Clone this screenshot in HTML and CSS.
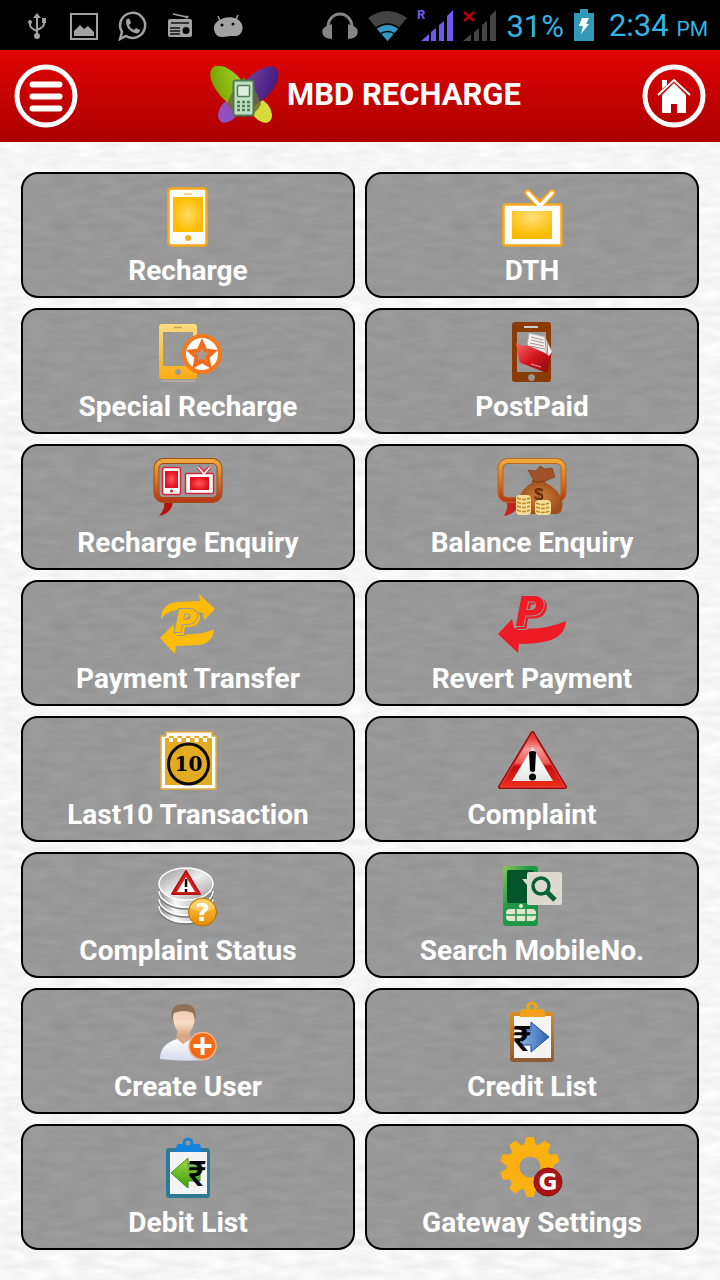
FILE: index.html
```html
<!DOCTYPE html>
<html lang="en">
<head>
<meta charset="utf-8">
<meta name="viewport" content="width=device-width, initial-scale=1">
<title>MBD RECHARGE</title>
<link rel="stylesheet" href="styles.css">
</head>
<body>
<svg class="defs" width="0" height="0" aria-hidden="true">
  <defs>
    <radialGradient id="gold"><stop offset="0" stop-color="#ffdc68"/><stop offset="1" stop-color="#fcbc00"/></radialGradient>
    <radialGradient id="goldTop" cy=".2" r=".7"><stop offset="0" stop-color="#ffe07a"/><stop offset="1" stop-color="#fbbb00"/></radialGradient>
    <radialGradient id="redGlow"><stop offset="0" stop-color="#ff5a5a"/><stop offset="1" stop-color="#e3101f"/></radialGradient>
    <linearGradient id="amber" x2="0" y2="1"><stop offset="0" stop-color="#fbdc80"/><stop offset="1" stop-color="#fbab12"/></linearGradient>
    <linearGradient id="bubble" x2="0" y2="1"><stop offset="0" stop-color="#f0a83c"/><stop offset=".6" stop-color="#cf6a24"/><stop offset="1" stop-color="#b83a18"/></linearGradient>
    <linearGradient id="folder" x2="1" y2="1"><stop offset="0" stop-color="#f46a6a"/><stop offset=".5" stop-color="#d4141c"/><stop offset="1" stop-color="#800a0c"/></linearGradient>
    <linearGradient id="warn" x2="0" y2="1"><stop offset="0" stop-color="#e01818"/><stop offset=".3" stop-color="#f79a9a"/><stop offset=".55" stop-color="#ee5a5a"/><stop offset=".62" stop-color="#c80c0c"/><stop offset="1" stop-color="#ee2c1c"/></linearGradient>
    <linearGradient id="paper" x2="0" y2="1"><stop offset="0" stop-color="#dcdcdc"/><stop offset=".4" stop-color="#fff"/><stop offset="1" stop-color="#e4e4e4"/></linearGradient>
    <linearGradient id="steel" x2="1"><stop offset="0" stop-color="#888"/><stop offset=".3" stop-color="#fafafa"/><stop offset=".7" stop-color="#bbb"/><stop offset="1" stop-color="#777"/></linearGradient>
    <linearGradient id="disc" x2="1" y2="1"><stop offset="0" stop-color="#8f8f8f"/><stop offset=".5" stop-color="#eee"/><stop offset="1" stop-color="#999"/></linearGradient>
    <linearGradient id="coin" x2="0" y2="1"><stop offset="0" stop-color="#ffca55"/><stop offset="1" stop-color="#e58a00"/></linearGradient>
    <linearGradient id="green" x2="1" y2="1"><stop offset="0" stop-color="#8ccc50"/><stop offset=".4" stop-color="#1f9a49"/><stop offset="1" stop-color="#1d9448"/></linearGradient>
    <linearGradient id="face" x2="0" y2="1"><stop offset="0" stop-color="#f0c3a0"/><stop offset=".6" stop-color="#f9dec6"/><stop offset="1" stop-color="#dcaa84"/></linearGradient>
    <linearGradient id="shirt" x2="0" y2="1"><stop offset="0" stop-color="#fff"/><stop offset="1" stop-color="#d5d9ec"/></linearGradient>
    <linearGradient id="blueArrow" x2="1"><stop offset="0" stop-color="#8aaee0"/><stop offset="1" stop-color="#2d62b0"/></linearGradient>
    <linearGradient id="greenArrow" x2="0" y2="1"><stop offset="0" stop-color="#9fdc4a"/><stop offset="1" stop-color="#3d9c08"/></linearGradient>
    <linearGradient id="wood" x2="0" y2="1"><stop offset="0" stop-color="#d98e24"/><stop offset="1" stop-color="#8b5a34"/></linearGradient>
    <radialGradient id="bag"><stop offset="0" stop-color="#c98038"/><stop offset="1" stop-color="#a04e1c"/></radialGradient>
    <linearGradient id="petalGreen" x2="1" y2="1"><stop offset="0" stop-color="#6a9c00"/><stop offset="1" stop-color="#b4dc2c"/></linearGradient>
    <linearGradient id="petalPurple" x1="1" x2="0" y2="1"><stop offset="0" stop-color="#3a1478"/><stop offset="1" stop-color="#7c48a8"/></linearGradient>
    <path id="tooth" d="M31 2h6l3 11H28z" stroke-width="2" stroke-linejoin="round"/>
  </defs>
</svg>

<div class="status">
  <div class="status-left">
    <svg class="notice" viewBox="0 0 32 32"><g fill="none" stroke="#a2a2a2" stroke-width="2"><path d="M17 7v20M10 12v4q0 3 7 6M24 12v3q0 3-7 6"/></g><g fill="#a2a2a2"><path d="M17 4l4 5h-8z"/><circle cx="17" cy="27" r="3"/><circle cx="10" cy="13" r="2"/><path d="M22 9h4v5h-4z"/></g></svg>
    <svg class="notice" viewBox="0 0 32 32"><path d="M3 5h26v25H3z" fill="none" stroke="#a2a2a2" stroke-width="2"/><path d="M6 27v-5l6-6 4 4 4-3 6 6v4z" fill="#a2a2a2"/></svg>
    <svg class="notice" viewBox="0 0 32 32"><path d="M4 30l2-7a12.500 12.500 0 1 1 4 4z" fill="none" stroke="#a2a2a2" stroke-width="2.500"/><path d="M10 12c1-3 3-3 4-1l1 3-2 2c1 3 3 4 5 5l2-2 4 2c0 3-3 4-5 3-5-1-9-6-9-12z" fill="#a2a2a2"/></svg>
    <svg class="notice" viewBox="0 0 32 32"><path d="M9 5l14 3" stroke="#a2a2a2" stroke-width="1.500"/><circle cx="23" cy="8" r="1.500" fill="#a2a2a2"/><rect x="4" y="10" width="24" height="18" rx="2" fill="#a2a2a2"/><path d="M7 14h18M6 19h10M6 22h10M6 25h10" stroke="#111" stroke-width="1.500"/><circle cx="22" cy="21.500" r="3.500" fill="#050505"/></svg>
    <svg class="notice" viewBox="0 0 32 32"><path d="M9 14L6 7M23 13l3-7" stroke="#a2a2a2" stroke-width="1.500"/><path d="M8 11c3-3 12-4 17-1 6 3 7 10 4 14-2 4-7 3-10 3s-5 1-9 1c-6 0-8-5-8-9 0-4 3-7 6-8z" fill="#a2a2a2"/><circle cx="10" cy="16" r="1.500"/><circle cx="21" cy="15" r="1.500"/></svg>
  </div>
  <div class="status-right">
    <svg width="36" height="32" viewBox="0 0 36 32"><path d="M6 21v-3a12 13 0 0 1 24 0v3" fill="none" stroke="#858585" stroke-width="3"/><path d="M10 15v15c-12 0-12-11-5-13zM26 15v15c12 0 12-11 5-13z" fill="#858585"/></svg>
    <svg width="39" height="32" viewBox="0 0 39 32"><path d="M0 9Q19-5 39 9L19.500 32z" fill="#444"/><path d="M9 20q10.500-8 21 0L19.500 32z" fill="#3498c0"/><path d="M8 19q11.500-8 23 0M12 25q7.500-5 15 0" fill="none" stroke="#000" stroke-width="1.500"/></svg>
    <svg class="signal" width="36" height="34" viewBox="0 0 36 34"><text class="roam" x="0" y="11" fill="#7456f0">R</text><path d="M4 33l8-7v7zM14 24l5-4v13h-5zM22 17l5-4v20h-5zM30 8l6-6v31h-6z" fill="#7456f0"/></svg>
    <svg width="33" height="34" viewBox="0 0 33 34"><path d="M1 4l10 9M11 4L1 13" stroke="#b80000" stroke-width="2.500"/><path d="M0 33l8-7v7zM11 24l5-4v13h-5zM19 17l5-4v20h-5zM27 8l6-6v31h-6z" fill="#444"/></svg>
    <span class="percent">31%</span>
    <svg width="20" height="32" viewBox="0 0 20 32"><path d="M0 4h6V0h8v4h6v28H0z" fill="#3498b8"/><path d="M8 9h7l-3 6h3L7 25l2-8H5z" fill="#fff"/></svg>
    <time class="clock">2:34 <small>PM</small></time>
  </div>
</div>

<header class="bar">
  <button class="round" type="button" aria-label="Menu">
    <svg viewBox="0 0 64 64"><circle cx="32" cy="32" r="29" fill="none" stroke="#fff" stroke-width="5"/><path d="M18.500 20.500h27M18.500 32.500h27M18.500 44.500h27" stroke="#fff" stroke-width="6" stroke-linecap="round"/></svg>
  </button>
  <div class="brand">
    <svg class="logo" viewBox="0 0 70 58"><ellipse cx="22" cy="45" rx="9" ry="14" transform="rotate(38 22 42)" fill="#9050c0"/><ellipse cx="50" cy="45" rx="9" ry="14" transform="rotate(-38 50 42)" fill="#d8dc38"/><ellipse cx="21" cy="21" rx="13" ry="26" transform="rotate(-41 21 21)" fill="url(#petalGreen)"/><ellipse cx="49" cy="21" rx="13" ry="26" transform="rotate(45 49 21)" fill="url(#petalPurple)"/><path d="M35 11q-13 14-17 27 6 10 17 13 13-3 17-13Q48 24 35 11z" fill="#766b2e" opacity=".85"/><rect x="24" y="14" width="21" height="36" rx="2" fill="#557b56" stroke="#4c7450"/><rect x="25.500" y="15.500" width="18" height="33" rx="1" fill="#bfe0c0"/><rect x="28.500" y="19.500" width="12" height="11" rx="1" fill="#dcefdc" stroke="#557b56" stroke-width="1.500"/><path d="M28 36h13M28 40h13M28 44h13" stroke="#557b56" stroke-width="2.500" stroke-dasharray="3 2"/></svg>
    <h1>MBD RECHARGE</h1>
  </div>
  <button class="round" type="button" aria-label="Home">
    <svg viewBox="0 0 64 64"><circle cx="32" cy="32" r="29" fill="none" stroke="#fff" stroke-width="5"/><path d="M32 19L20 31v18h9V40h6v9h9V31z" fill="#fff"/><path d="M16 31l16-15 16 15" fill="none" stroke="#fff" stroke-width="2"/><path d="M20 16h5v5l-5 4z" fill="#fff"/></svg>
  </button>
</header>

<main class="menu">
  <button class="tile" type="button">
    <svg viewBox="0 0 72 68"><rect x="16.500" y="4.500" width="38" height="57" rx="3" fill="#fff" stroke="#f9a81c" stroke-width="2.500"/><rect x="21" y="13" width="30" height="35" fill="url(#gold)"/><path d="M32 10h8" stroke="#f6c46c" stroke-width="1.500"/><circle cx="36" cy="54" r="3" fill="#f5ae20"/></svg>
    <span>Recharge</span>
  </button>
  <button class="tile" type="button">
    <svg viewBox="0 0 72 68"><path d="M32 9l12 12L56 9" fill="none" stroke="#f9a81c" stroke-width="7" stroke-linecap="round"/><rect x="7.500" y="20.500" width="58" height="41" rx="2" fill="#fff" stroke="#f9a81c" stroke-width="2.500"/><path d="M32 9l12 13L56 9" fill="none" stroke="#fff" stroke-width="3.500" stroke-linecap="round"/><rect x="16" y="27" width="40" height="28" fill="url(#goldTop)"/></svg>
    <span>DTH</span>
  </button>
  <button class="tile" type="button">
    <svg viewBox="0 0 72 68"><path fill-rule="evenodd" d="M10 4h32q3 0 3 3v49q0 3-3 3H10q-3 0-3-3V7q0-3 3-3zm1 8v34h30V12zm15 37a3 3 0 1 0 .1 0z" fill="url(#amber)"/><path d="M22 7.500h8" stroke="#dca040" stroke-width="1.500"/><path d="M9 61h34" stroke="#d8c9a8" opacity=".7"/><circle cx="50" cy="34" r="18" fill="#fff" stroke="#f47a1c" stroke-width="4"/><path d="M50 23l3.500 7.500 8 1-6 5.500 1.500 8-7-4-7 4 1.500-8-6-5.500 8-1z" fill="#a59b92" stroke="#f26a1c" stroke-width="4"/></svg>
    <span>Special Recharge</span>
  </button>
  <button class="tile" type="button">
    <svg viewBox="0 0 72 68"><path fill-rule="evenodd" d="M19 2h33q3 0 3 3v54q0 3-3 3H19q-3 0-3-3V5q0-3 3-3zm2 10v40h29V12zm14.500 42a3.500 3.500 0 1 0 .1 0z" fill="#8b3a04"/><path d="M28 7h14" stroke="#ccc" stroke-width="2"/><path d="M33 13l16 4 7 15-6 14-20-12z" fill="#f4f0f0" stroke="#b9a9a9" stroke-width=".7"/><path d="M35 17l12 3M35 20l13 3M34 23l14 3M34 26l15 3M49 18l2 22M51 22l1 16" stroke="#a98f8f" stroke-width="1"/><path d="M20 23l7 3 4-1 18 8 4 3 3-4-5 20q-1 1-3 0L25 43q-1 0-2-3z" fill="url(#folder)"/><path d="M35 44l10 3" stroke="#f8a0a0"/></svg>
    <span>PostPaid</span>
  </button>
  <button class="tile" type="button">
    <svg viewBox="0 0 72 68"><path d="M12 43q2 10-5 17 13-3 14-14z" fill="#b5120f"/><rect x="4.500" y="5" width="63" height="39" rx="7" fill="none" stroke="#a04c18" stroke-width="6"/><rect x="4.500" y="5" width="63" height="39" rx="7" fill="none" stroke="url(#bubble)" stroke-width="4"/><rect x="10.500" y="11.500" width="18" height="27" rx="2" fill="#fff" stroke="#dc2434" stroke-width="1.500"/><rect x="13" y="15" width="13" height="17" fill="url(#redGlow)"/><circle cx="19.500" cy="35" r="1.500" fill="#d22"/><path d="M46 11l6 6 6-6" fill="none" stroke="#e02c3c" stroke-width="4"/><rect x="33.500" y="17.500" width="28" height="20" rx="1" fill="#fff" stroke="#dc2434" stroke-width="1.500"/><path d="M46 11l6 7 6-7" fill="none" stroke="#fff" stroke-width="1.500"/><rect x="38" y="21" width="19" height="13" fill="url(#redGlow)"/></svg>
    <span>Recharge Enquiry</span>
  </button>
  <button class="tile" type="button">
    <svg viewBox="0 0 72 68"><path d="M9 42q5 8-1 18 12-2 17-14z" fill="#c9201c"/><rect x="4.500" y="5" width="63" height="39" rx="7" fill="none" stroke="#b56820" stroke-width="6"/><rect x="4.500" y="5" width="63" height="39" rx="7" fill="none" stroke="url(#bubble)" stroke-width="4"/><path d="M37 28v-5l-5-9 8 1 4-5 5 3 7-1 3 9-10 4v4z" fill="#a0522a" stroke="#7d3c1c" stroke-width=".7"/><path d="M37 26q8-3 11 0 14 6 18 18 2 14-6 14H28q-9-2-6-14 4-12 15-18z" fill="url(#bag)"/><path d="M36 25q6 2 12 0" stroke="#7a3a12" fill="none"/><text class="dollar" x="38" y="44">$</text><rect x="20" y="39" width="15" height="20" rx="4" fill="#f5dc98"/><rect x="39" y="44" width="16" height="15" rx="4" fill="#f5dc98"/><path d="M21 42q7 3 13 0m-13 4q7 3 13 0m-13 4q7 3 13 0m-13 4q7 3 13 0m6-7q7 3 13 0m-13 4q7 3 13 0m-13 4q7 3 13 0" fill="none" stroke="#c08c28" stroke-width="1.500" stroke-dasharray="4 1"/></svg>
    <span>Balance Enquiry</span>
  </button>
  <button class="tile" type="button">
    <svg viewBox="0 0 72 68"><g fill="#fdbc08"><path d="M9 27Q9 12 25 10l23-1-1-7 16 15-11 11-1-7Q34 18 25 18 13 20 9 27z"/><path d="M8 46l13-13 3 9q26 2 38-5-1 14-15 16l-23 1-1 8z"/></g><text class="rupay gold-p" x="22" y="40">P</text></svg>
    <span>Payment Transfer</span>
  </button>
  <button class="tile" type="button">
    <svg viewBox="0 0 72 68"><path d="M2 42l14-15 2 9q30 3 52-7-1 15-18 20-12 3-29 3l-1 9z" fill="#ed1c24"/><text class="rupay red-p" x="19" y="34">P</text></svg>
    <span>Revert Payment</span>
  </button>
  <button class="tile" type="button">
    <svg viewBox="0 0 72 68"><path d="M14 4h46v4h4v53H9V8h5z" fill="#fff" stroke="#e2b03c" stroke-width="1.500"/><rect x="13" y="10" width="47" height="47" fill="#e3ab22"/><path d="M17 9.500h42" stroke="#e3ab22" stroke-width="3" stroke-dasharray="4.500 4"/><path d="M17 12h42" stroke="#fff" stroke-width="4" stroke-dasharray="4 4.500"/><circle cx="36.500" cy="36" r="20" fill="none" stroke="#0a0a0a" stroke-width="3"/><text class="ten" x="36.500" y="43">10</text></svg>
    <span>Last10 Transaction</span>
  </button>
  <button class="tile" type="button">
    <svg viewBox="0 0 72 68"><path d="M36.500 5L4 59h65z" fill="url(#warn)" stroke="#9c0c0c" stroke-width="4" stroke-linejoin="round"/><path d="M36.500 5L4 59h65z" fill="url(#warn)" stroke="#ec4848" stroke-width="1" stroke-linejoin="round"/><path d="M36.500 19L16 53h41z" fill="url(#paper)"/><path d="M33 24q3.500-2 7 0l-1 19q-2.500 2-5 0z"/><circle cx="36.500" cy="49" r="3.500"/></svg>
    <span>Complaint</span>
  </button>
  <button class="tile" type="button">
    <svg viewBox="0 0 72 68"><path d="M7 21v24a27 15 0 0 0 54 0V21z" fill="url(#steel)"/><path d="M7 29a27 16 0 0 0 54 0M7 37a27 16 0 0 0 54 0M7 44a27 16 0 0 0 54 0" fill="none" stroke="#777" stroke-width="1.500"/><path d="M7 27a27 16 0 0 0 54 0M7 35a27 16 0 0 0 54 0M7 42a27 16 0 0 0 54 0" fill="none" stroke="#fff" stroke-width="1.500"/><ellipse cx="34" cy="20" rx="27" ry="16" fill="url(#disc)" stroke="#fff" stroke-width="1.500"/><path d="M34 7L20 30h28z" fill="#de2020" stroke="#b81212" stroke-width="2" stroke-linejoin="round"/><path d="M34 13l-9 15h18z" fill="#fff"/><path d="M34 15v8M34 25v3" stroke="#000" stroke-width="2.500"/><circle cx="50.500" cy="48" r="14" fill="url(#coin)" stroke="#b06c08"/><path d="M38 44a13 11 0 0 1 25 0q-12 7-25 0z" fill="#ffdf90" opacity=".5"/><text class="mark" x="50.500" y="57">?</text></svg>
    <span>Complaint Status</span>
  </button>
  <button class="tile" type="button">
    <svg viewBox="0 0 72 68"><rect x="7" y="2" width="35" height="60" rx="3" fill="url(#green)"/><rect x="11" y="6" width="27" height="33" rx="2" fill="#04542c"/><path d="M33 8h31q2 0 2 2v29q0 2-2 2H33q-2 0-2-2V21l-5-6h5v-5q0-2 2-2z" fill="#dddad0"/><circle cx="45" cy="22" r="8" fill="none" stroke="#07603a" stroke-width="3.500"/><path d="M51 28l8 8" stroke="#07603a" stroke-width="5"/><circle cx="25" cy="42" r="2" fill="#e8ecd8"/><rect x="10" y="45" width="30" height="12" rx="4" fill="#e2e6d0"/><path d="M10 51h30M20 45v12M30 45v12" stroke="#1f9a49" stroke-width="1.500"/></svg>
    <span>Search MobileNo.</span>
  </button>
  <button class="tile" type="button">
    <svg viewBox="0 0 72 68"><path d="M25 30h13l1 14H24z" fill="#d8a888"/><path d="M8 59q0-15 17-20l6 5 8-5q14 4 16 21-24 2-47-1z" fill="url(#shirt)"/><path d="M21 14q0-9 11-9t11 9q0 12-5 18-6 5-12 0-5-6-5-18z" fill="url(#face)"/><path d="M20 20Q17 4 32 4q14 0 11 16l-2-7q-9-4-19 0z" fill="#917158"/><circle cx="50.500" cy="46" r="13.500" fill="#f36a16" stroke="#f6b48a" stroke-width="1.500"/><path d="M50.500 37v18M41.500 46h18" stroke="#fff" stroke-width="4"/></svg>
    <span>Create User</span>
  </button>
  <button class="tile" type="button">
    <svg viewBox="0 0 72 68"><rect x="14" y="12" width="44" height="50" rx="3" fill="url(#wood)"/><path d="M18 16h37v42H18z" fill="#f4f4f4"/><circle cx="36" cy="7" r="4" fill="none" stroke="#f0a810" stroke-width="3"/><path d="M26 9h5q5 4 10 0h6q2 0 2 8H24q0-8 2-8z" fill="#f0a01a"/><path d="M26 30h9v-8l18 15-18 15v-7h-9z" fill="url(#blueArrow)" stroke="#264f96"/><text class="rupee" x="17" y="51">₹</text></svg>
    <span>Credit List</span>
  </button>
  <button class="tile" type="button">
    <svg viewBox="0 0 72 68"><rect x="14" y="12" width="44" height="50" rx="3" fill="#2e7a94"/><path d="M18 16h37v42H18z" fill="#f4f4f4"/><circle cx="36" cy="7" r="4" fill="none" stroke="#1284dc" stroke-width="3"/><path d="M26 8h5q5 4 10 0h6q2 0 2 8H24q0-8 2-8z" fill="#1284dc"/><path d="M48 30H36v-8L19 37l17 15v-7h12z" fill="url(#greenArrow)" stroke="#3a8c12"/><text class="rupee" x="36" y="50">₹</text></svg>
    <span>Debit List</span>
  </button>
  <button class="tile" type="button">
    <svg viewBox="0 0 72 68"><circle cx="34" cy="31" r="17" fill="none" stroke="#faae10" stroke-width="13"/><g fill="#fbb110" stroke="#fbb110"><use href="#tooth"/><use href="#tooth" transform="rotate(36 34 31)"/><use href="#tooth" transform="rotate(72 34 31)"/><use href="#tooth" transform="rotate(108 34 31)"/><use href="#tooth" transform="rotate(144 34 31)"/><use href="#tooth" transform="rotate(180 34 31)"/><use href="#tooth" transform="rotate(216 34 31)"/><use href="#tooth" transform="rotate(252 34 31)"/><use href="#tooth" transform="rotate(288 34 31)"/><use href="#tooth" transform="rotate(324 34 31)"/></g><circle cx="52" cy="46" r="14" fill="#a81418" stroke="#8a0c10"/><text class="gee" x="52" y="54">G</text></svg>
    <span>Gateway Settings</span>
  </button>
</main>
</body>
</html>
```

FILE: styles.css
```css
* {
  box-sizing: border-box;
}

body {
  margin: 0;
  min-height: 100vh;
  font-family: Roboto, "Liberation Sans", sans-serif;
  background-color: #f6f6f6;
  /* embossed paper grain */
  background-image: url("data:image/svg+xml,%3Csvg xmlns='http://www.w3.org/2000/svg' width='400' height='400'%3E%3Cfilter id='p' x='0' y='0' width='100%25' height='100%25' color-interpolation-filters='sRGB'%3E%3CfeTurbulence type='fractalNoise' baseFrequency='.04 .13' numOctaves='2' seed='4' stitchTiles='stitch'/%3E%3CfeColorMatrix values='.1 0 0 0 .915 .1 0 0 0 .915 .1 0 0 0 .915 0 0 0 0 1'/%3E%3C/filter%3E%3Crect width='400' height='400' filter='url(%23p)'/%3E%3C/svg%3E");
}

.defs {
  position: absolute;
}

svg {
  display: block;
  flex: none;
}

button {
  margin: 0;
  font: inherit;
  cursor: pointer;
}

.status {
  display: flex;
  justify-content: space-between;
  align-items: center;
  height: 50px;
  padding: 0 12px 0 20px;
  background: #000;
  color: #33b5e5;
}

.status-left {
  display: flex;
  gap: 16px;
}

.notice {
  width: 32px;
  height: 32px;
}

.status-right {
  display: flex;
  align-items: center;
  gap: 10px;
}

.percent,
.clock {
  padding-top: 4px;
  font-size: 31px;
  line-height: 36px;
  white-space: nowrap;
}

.clock {
  margin-left: 5px;
}

.clock small {
  font-size: 21px;
}

.signal {
  overflow: visible;
}

.roam {
  font-size: 13px;
  font-weight: 700;
}

.bar {
  display: flex;
  justify-content: space-between;
  align-items: center;
  height: 92px;
  padding: 0 14px;
  background: linear-gradient(#e00404, #ab0000);
}

.round {
  width: 64px;
  height: 64px;
  padding: 0;
  border: 0;
  border-radius: 50%;
  background: none;
}

.brand {
  display: flex;
  align-items: center;
  gap: 8px;
  padding: 0 0 3px 10px;
}

.logo {
  width: 70px;
  height: 58px;
}

h1 {
  margin: 0;
  color: #fff;
  font-size: 31px;
  line-height: 40px;
  font-weight: 700;
}

.menu {
  display: grid;
  grid-template-columns: repeat(2, minmax(0, 1fr));
  gap: 10px;
  padding: 30px 21px;
}

.tile {
  display: flex;
  flex-direction: column;
  align-items: center;
  gap: 1px;
  padding: 10px 8px 7px;
  border: 2px solid #000;
  border-radius: 17px;
  background: rgba(0, 0, 0, 0.38);
  color: #fff;
  font-size: 28px;
  line-height: 36px;
  font-weight: 700;
}

.tile svg {
  width: 72px;
  height: 68px;
  overflow: visible;
}

.dollar {
  font: 700 17px "Liberation Sans", sans-serif;
  fill: #5e2c08;
}

.rupay {
  font: italic 700 32px "DejaVu Sans", sans-serif;
  paint-order: stroke;
  stroke: #999;
  stroke-width: 2px;
}

.gold-p {
  fill: #fdbc08;
  filter: drop-shadow(2px 2px 0 #fdbc08) drop-shadow(1px 1px 0 #999);
}

.red-p {
  font-size: 40px;
  fill: #ed1c24;
  filter: drop-shadow(2px 2px 0 #ed1c24) drop-shadow(1px 1px 0 #999);
}

.ten {
  font: 700 20px "DejaVu Serif", serif;
  text-anchor: middle;
}

.mark {
  font: 700 25px "DejaVu Sans", sans-serif;
  fill: #fff;
  text-anchor: middle;
}

.rupee {
  font: 500 35px Roboto, "DejaVu Sans", sans-serif;
}

.gee {
  font: 700 23px "DejaVu Sans", sans-serif;
  fill: #fff;
  text-anchor: middle;
}
```
